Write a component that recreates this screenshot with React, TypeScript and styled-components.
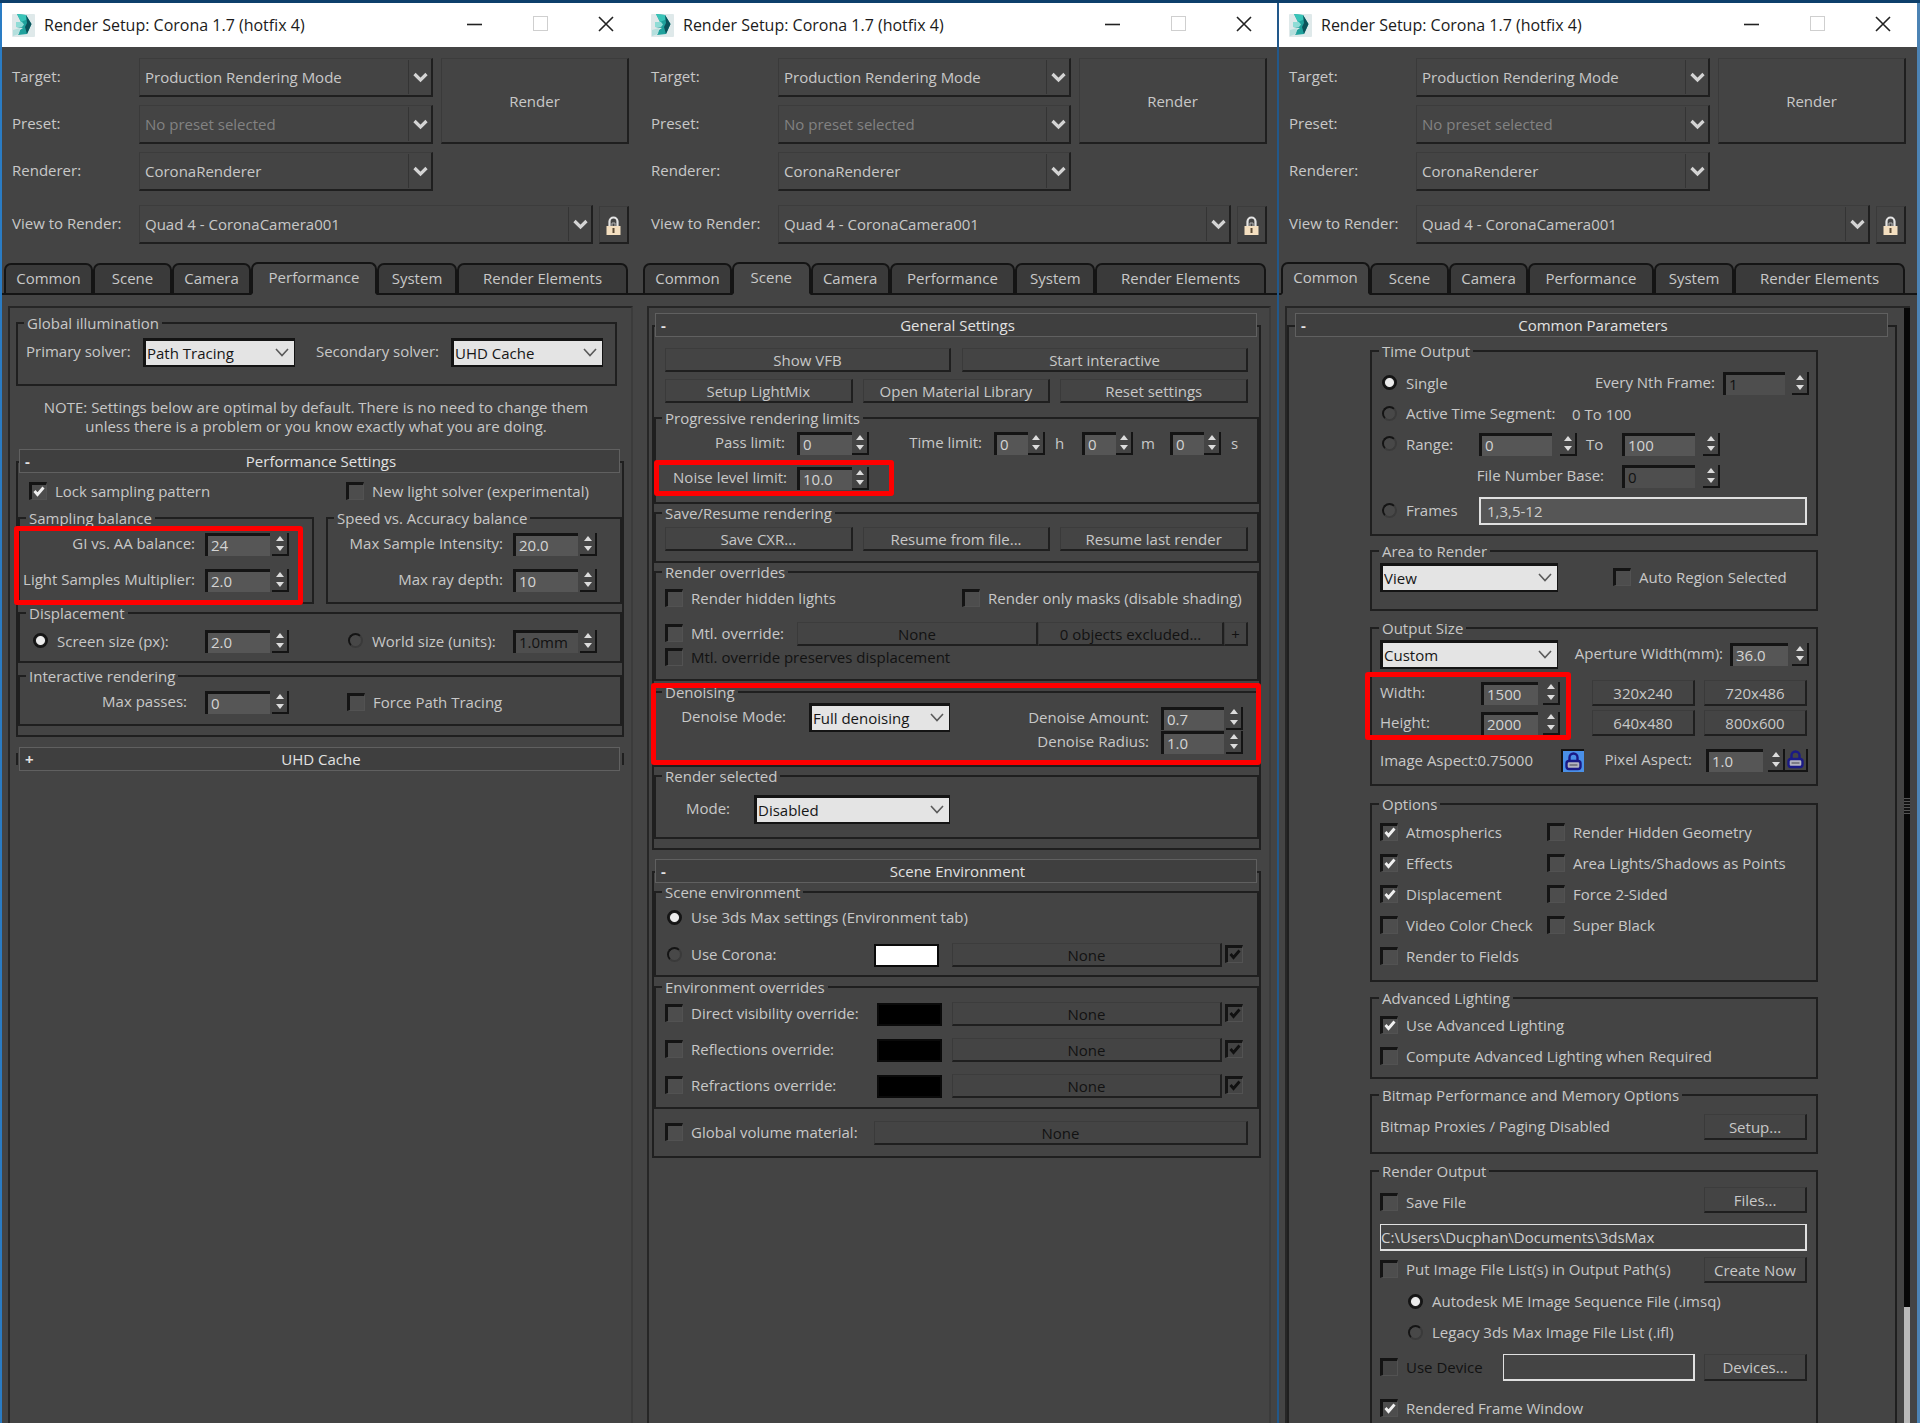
import React, { useId } from "react";
import type { ReactNode } from "react";
import styled, { createGlobalStyle, css } from "styled-components";

const c = {
  bg: "#444444",
  line: "#1f1f1f",
  deep: "#141414",
  text: "#c8c8c8",
  bright: "#e2e2e2",
  off: "#121212",
  field: "#565656",
  blue: "#2a7cc4",
  seam: "#22588a",
  red: "#ff0000",
};

const GlobalStyle = createGlobalStyle`
  *, *::before, *::after { box-sizing: border-box; }
  body {
    margin: 0;
    background: ${c.bg};
    color: ${c.text};
    font: 15px/20px "Open Sans", "Noto Sans", sans-serif;
  }
  button, input, select { font: inherit; color: inherit; margin: 0; }
  fieldset { min-width: 0; margin: 0; padding: 0; }
`;

/* ---------- window shell ---------- */

const Desktop = styled.main`
  display: grid;
  grid-template-columns: 639fr 638fr 643fr;
  min-height: 100vh;
  border-top: 3px solid #0d3f6b;
  overflow: hidden;
`;

const Win = styled.section<{ $left?: string; $tail: number }>`
  position: relative;
  display: flex;
  flex-direction: column;
  min-width: 0;
  background: ${c.bg};
  &::before {
    content: "";
    position: absolute;
    z-index: 2;
    inset: 0 auto 0 0;
    width: 2px;
    background: ${(p) => p.$left ?? "transparent"};
  }
  &::after {
    content: "";
    position: absolute;
    z-index: 2;
    inset: 0 0 0 auto;
    width: ${(p) => (p.$tail ? 3 : 0)}px;
    background: #4c83b4;
  }
`;

const TitleBar = styled.header<{ $tail: number }>`
  display: flex;
  align-items: center;
  height: 44px;
  padding: 0 ${(p) => p.$tail}px 0 12px;
  background: #fff;
  color: #1b1b1b;
`;

const Title = styled.h1`
  flex: 1;
  margin: 0 0 0 9px;
  font-size: 16px;
  font-weight: 400;
  white-space: nowrap;
`;

const Caption = styled.button`
  display: grid;
  place-items: center;
  width: 66px;
  height: 44px;
  padding: 0 0 3px;
  border: 0;
  background: none;
`;

const Form = styled.div<{ $tail: number }>`
  display: grid;
  gap: 14px;
  padding: 11px ${(p) => p.$tail + 10}px 0 12px;
`;

const FormTop = styled.div`
  display: flex;
  align-items: flex-start;
  gap: 8px;
`;

const FormGrid = styled.div`
  flex: 1;
  display: grid;
  gap: 8px;
`;

const FormRow = styled.div`
  display: grid;
  grid-template-columns: 127px 1fr auto;
  align-items: center;
`;

const Raised = css`
  border: solid ${c.line};
  border-width: 1px 2px 2px 1px;
  border-top-color: #3c3c3c;
  border-left-color: #3a3a3a;
  background: #444;
`;

const RenderButton = styled.button`
  ${Raised}
  width: 188px;
  height: 86px;
`;

const LockButton = styled.button`
  ${Raised}
  display: grid;
  place-items: center;
  width: 30px;
  height: 38px;
  margin-left: 6px;
  padding: 4px 0 0;
`;

const DarkBox = styled.div`
  position: relative;
  height: 39px;
  svg {
    position: absolute;
    right: 4px;
    top: 14px;
    pointer-events: none;
  }
  &::after {
    content: "";
    position: absolute;
    right: 24px;
    top: 2px;
    bottom: 3px;
    width: 1px;
    background: #343434;
  }
`;

const DarkSelect = styled.select<{ $dim?: boolean }>`
  ${Raised}
  appearance: none;
  width: 100%;
  height: 100%;
  padding: 0 26px 0 5px;
  border-radius: 0;
  ${(p) => p.$dim && "color: #828282;"}
`;

const LightBox = styled.div<{ $w: number }>`
  position: relative;
  width: ${(p) => p.$w}px;
  height: 29px;
  svg {
    position: absolute;
    right: 6px;
    top: 10px;
    pointer-events: none;
  }
`;

const LightSelect = styled.select`
  appearance: none;
  width: 100%;
  height: 100%;
  padding: 0 20px 0 1px;
  border: solid ${c.deep};
  border-width: 3px 1px 2px 3px;
  border-radius: 0;
  background: #e4e4e4;
  color: #161616;
`;

const Tabs = styled.div<{ $tail: number }>`
  display: grid;
  grid-template-columns: 89fr 79fr 79fr 126fr 80fr 171fr;
  align-items: end;
  margin-top: 18px;
  padding: 0 ${(p) => p.$tail + 11}px 0 4px;
  background: linear-gradient(${c.deep}, ${c.deep}) bottom / 100% 2px no-repeat;
`;

const Tab = styled.button<{ $on: boolean }>`
  height: 32px;
  padding: 0 0 3px;
  border: 2px solid ${c.deep};
  border-radius: 7px 7px 0 0;
  background: #3a3a3a;
  ${(p) =>
    p.$on &&
    css`
      height: 33px;
      border-bottom-color: ${c.bg};
      background: ${c.bg};
    `}
`;

const Panel = styled.div<{ $tail: number; $scroll?: boolean }>`
  flex: 1;
  display: flex;
  margin: 11px ${(p) => p.$tail + 6}px 0 8px;
  border: solid #262626;
  border-width: 2px ${(p) => (p.$scroll ? 0 : 2)}px 0 2px;
  border-right-color: #3b3b3b;
`;

const PanelBody = styled.div<{ $pad: string }>`
  flex: 1;
  display: flex;
  flex-direction: column;
  min-width: 0;
  padding: ${(p) => p.$pad};
`;

const ScrollRail = styled.div`
  display: flex;
  flex-direction: column;
  justify-content: space-between;
  width: 6px;
  background: #080808;
`;

const Grip = styled.span`
  height: 16px;
  margin-top: 490px;
  background: repeating-linear-gradient(#555 0 1px, #111 1px 3px);
`;

const Thumb = styled.span`
  height: 116px;
  background: #b9b9b9;
`;

/* ---------- rollouts and groups ---------- */

const RollHead = styled.button<{ $inset?: boolean }>`
  position: relative;
  z-index: 1;
  display: grid;
  grid-template-columns: 20px 1fr 20px;
  align-items: center;
  height: 24px;
  margin: ${(p) => (p.$inset ? "0 9px 0 8px" : "0 4px 0 3px")};
  padding: 0 2px 0 5px;
  border: 1px solid #606060;
  background: #3f3f3f;
  color: ${c.bright};
  text-align: center;
  line-height: 20px;
`;

const Sign = styled.span`
  text-align: left;
  font-weight: 700;
`;

const RollFrame = styled.div<{ $pb: number; $open?: boolean }>`
  display: flex;
  flex-direction: column;
  margin-top: -12px;
  padding: 10px 0 ${(p) => p.$pb}px;
  border: 2px solid ${c.line};
  ${(p) => p.$open && "flex: 1; border-bottom: 0; padding-left: 7px; padding-right: 3px;"}
`;

const Stub = styled.div`
  height: 12px;
  margin-top: -18px;
  border: solid ${c.line};
  border-width: 0 2px;
`;

const Roll = styled.section<{ $grow?: boolean; $mt?: number }>`
  display: flex;
  flex-direction: column;
  margin-top: ${(p) => p.$mt ?? 0}px;
  ${(p) => p.$grow && "flex: 1;"}
`;

const GroupBox = styled.fieldset<{ $mt: number; $narrow?: boolean; $open?: boolean }>`
  margin-top: ${(p) => p.$mt}px;
  border: 2px solid ${c.line};
  ${(p) => p.$narrow && "width: 100%; max-width: 448px; margin-left: auto; margin-right: auto;"}
  ${(p) => p.$open && "flex: 1; border-bottom: 0;"}
  > legend {
    margin-left: ${(p) => (p.$narrow ? 7 : 6)}px;
    padding: 0 3px;
    height: 18px;
    line-height: 18px;
  }
`;

const Stack = styled.div<{ $gap: number; $pad?: string }>`
  display: grid;
  gap: ${(p) => p.$gap}px;
  padding: ${(p) => p.$pad ?? "0"};
`;

const Row = styled.div<{ $h?: number; $pad?: string; $mt?: number; $low?: boolean }>`
  display: flex;
  align-items: ${(p) => (p.$low ? "flex-end" : "center")};
  height: ${(p) => p.$h ?? 20}px;
  margin-top: ${(p) => p.$mt ?? 0}px;
  padding: ${(p) => p.$pad ?? "0"};
  white-space: nowrap;
`;

const Cols = styled.div<{ $t: string; $gap?: string; $mt?: number; $pad?: string; $top?: boolean }>`
  display: grid;
  grid-template-columns: ${(p) => p.$t};
  gap: ${(p) => p.$gap ?? "0"};
  margin-top: ${(p) => p.$mt ?? 0}px;
  padding: ${(p) => p.$pad ?? "0"};
  align-items: ${(p) => (p.$top ? "start" : "center")};
  white-space: nowrap;
`;

const Push = styled.div`
  display: flex;
  align-items: center;
  margin-left: auto;
`;

const Marked = styled.div<{ $inset: string }>`
  position: relative;
  &::after {
    content: "";
    position: absolute;
    z-index: 3;
    inset: ${(p) => p.$inset};
    border: 5px solid ${c.red};
    border-radius: 3px;
    pointer-events: none;
  }
`;

const Note = styled.p`
  margin: 12px 8px 13px 0;
  line-height: 19px;
  text-align: center;
`;

/* ---------- controls ---------- */

const Push3d = styled.button<{ $h?: number; $off?: boolean }>`
  ${Raised}
  height: ${(p) => p.$h ?? 24}px;
  min-width: 0;
  padding: 0;
  line-height: 18px;
  white-space: nowrap;
  ${(p) => p.$off && `color: ${c.off};`}
`;

const WideButton = styled(Push3d)`
  flex: 1;
`;

const SizedButton = styled(Push3d)<{ $w: number }>`
  width: ${(p) => p.$w}px;
`;

const FieldLabel = styled.label<{ $w?: number; $pad?: number; $start?: boolean }>`
  ${(p) => (p.$w ? `flex: none; width: ${p.$w}px;` : "flex: 1;")}
  padding: 0 ${(p) => p.$pad ?? 10}px 3px 0;
  text-align: ${(p) => (p.$start ? "left" : "right")};
  white-space: nowrap;
`;

const Plain = styled.span<{ $w?: number; $pad?: number }>`
  width: ${(p) => (p.$w ? `${p.$w}px` : "auto")};
  padding: 0 0 2px ${(p) => p.$pad ?? 0}px;
`;

const NumInput = styled.input<{ $w: number }>`
  width: ${(p) => p.$w}px;
  height: 23px;
  padding: 0 0 2px 3px;
  border: solid ${c.deep};
  border-width: 3px 0 0 3px;
  border-radius: 0;
  background: ${c.field};
  color: #d4d4d4;
  &:disabled {
    background: #4e4e4e;
    color: ${c.off};
  }
`;

const Spin = styled.span<{ $gap: number }>`
  display: flex;
  flex-direction: column;
  width: 17px;
  height: 23px;
  margin-left: ${(p) => p.$gap}px;
  border: solid ${c.deep};
  border-width: 0 2px 2px 0;
`;

const SpinButton = styled.button`
  flex: 1;
  display: grid;
  place-items: center;
  padding: 0;
  border: 0;
  background: none;
`;

const NumWrap = styled.span`
  display: flex;
  flex: none;
  height: 23px;
`;

const TextInput = styled.input<{ $h?: number; $pad?: number; $fill?: boolean }>`
  flex: 1;
  min-width: 0;
  width: 100%;
  height: ${(p) => p.$h ?? 27}px;
  padding: 0 0 1px ${(p) => p.$pad ?? 0}px;
  border: solid #e0e0e0;
  border-width: ${(p) => (p.$fill ? "2px" : "1px 2px 2px 1px")};
  border-radius: 0;
  background: ${(p) => (p.$fill ? c.field : c.bg)};
  color: #cfcfcf;
`;

const Choice = styled.label<{ $w?: number; $ml?: number; $off?: boolean; $gap: number }>`
  display: flex;
  flex: none;
  align-items: center;
  gap: ${(p) => p.$gap}px;
  ${(p) => p.$w && `width: ${p.$w}px;`}
  height: 20px;
  margin-left: ${(p) => p.$ml ?? 0}px;
  padding-bottom: 2px;
  white-space: nowrap;
  ${(p) => p.$off && `color: ${c.off};`}
`;

const Tick = styled.span<{ $off?: boolean }>`
  position: relative;
  display: block;
  width: 18px;
  height: 18px;
  color: ${(p) => (p.$off ? "#111" : "#f0f0f0")};
  input {
    appearance: none;
    display: block;
    width: 18px;
    height: 18px;
    border: solid ${c.deep};
    border-width: 3px 1px 1px 3px;
    border-right-color: #525252;
    border-bottom-color: #525252;
    background: ${(p) => (p.$off ? c.bg : "#4d4d4d")};
  }
  svg {
    position: absolute;
    left: 4px;
    top: 4px;
    display: none;
    pointer-events: none;
  }
  input:checked + svg {
    display: block;
  }
`;

const Dot = styled.input`
  appearance: none;
  width: 15px;
  height: 15px;
  border: 2px solid ${c.deep};
  border-right-color: #3a3a3a;
  border-bottom-color: #3a3a3a;
  border-radius: 50%;
  background: #484848;
  &:checked {
    border-color: ${c.deep};
    background: radial-gradient(circle, #ececec 0 4px, #222 5px);
  }
`;

const Swatch = styled.button<{ $c: string }>`
  width: 65px;
  height: 23px;
  padding: 0;
  border: 2px solid #0a0a0a;
  background: ${(p) => p.$c};
`;

const AspectLock = styled.button<{ $on?: boolean }>`
  display: grid;
  flex: none;
  place-items: center;
  width: 23px;
  height: 23px;
  padding: 0;
  border: solid ${c.deep};
  border-width: ${(p) => (p.$on ? "2px 0 0 2px" : "0 2px 2px 0")};
  background: ${(p) => (p.$on ? "#4a90e8" : c.bg)};
`;

const DarkChevron = () => (
  <svg width="17" height="11" viewBox="0 0 17 11" aria-hidden="true">
    <path d="M2.5 2 L8.5 8 L14.5 2" fill="none" stroke="#d4d4d4" strokeWidth="3.2" />
  </svg>
);

const LightChevron = () => (
  <svg width="14" height="9" viewBox="0 0 14 9" aria-hidden="true">
    <path d="M1 1 L7 7.5 L13 1" fill="none" stroke="#5a5a5a" strokeWidth="1.6" />
  </svg>
);

const Logo = () => (
  <svg width="23" height="23" viewBox="0 0 23 23" aria-hidden="true">
    <rect width="23" height="23" rx="1" fill="#dfe9ea" />
    <path d="M5 0 L14 1 L19.5 10 L15 20 L6 21 L8 16 L11 14 L4 13 L4 8 L9 8 Z" fill="#1fa19c" />
    <path d="M5 0 L14 1 L16 5 L9 8 Z" fill="#38c4b8" />
    <path d="M14 1 L19.5 10 L15 20 L13 13 L15 9 Z" fill="#0b525a" />
    <path d="M4 8 L10 8 L12 10.500 L10 13 L4 13 Z" fill="#8fdcd6" />
    <path d="M1 16 L8 14 L7 20 L1 22 Z" fill="#b4dfdd" />
  </svg>
);

const Padlock = () => (
  <svg width="15" height="20" viewBox="0 0 15 20" aria-hidden="true">
    <path d="M3.5 10 V5.5 a4 4 0 0 1 8 0 V10" fill="none" stroke="#e4e4e4" strokeWidth="2.2" />
    <path d="M6 10 V7 h3 V10" fill="none" stroke="#b5b5b5" strokeWidth="1" />
    <rect x="0.500" y="10" width="14" height="9" fill="#f4dfc0" />
    <rect x="6.5" y="12" width="2" height="5" fill="#5a4a34" />
  </svg>
);

const MiniLock = () => (
  <svg width="17" height="19" viewBox="0 0 17 19" aria-hidden="true">
    <path d="M4.500 9 V5.500 a4 4 0 0 1 8 0 V9" fill="none" stroke="#1a1a86" strokeWidth="2.4" />
    <rect x="1.5" y="9" width="14" height="8" rx="2.500" fill="#b4b4c0" stroke="#1a1a86" strokeWidth="2.4" />
    <path d="M4.500 13 H12.500" stroke="#55555f" strokeWidth="1.200" />
  </svg>
);

const Arrow = ({ down }: { down?: boolean }) => (
  <svg width="8" height="5" viewBox="0 0 8 5" aria-hidden="true">
    <path d={down ? "M0 0 H8 L4 5 Z" : "M0 5 H8 L4 0 Z"} fill="#dcdcdc" />
  </svg>
);

/* ---------- composed parts ---------- */

function Num({ id, value, w, gap = 0, off, name }: { id?: string; value: string; w: number; gap?: number; off?: boolean; name?: string }) {
  return (
    <NumWrap>
      <NumInput id={id} aria-label={name} defaultValue={value} $w={w} disabled={off} />
      <Spin $gap={gap}>
        <SpinButton type="button" aria-label="Increase"><Arrow /></SpinButton>
        <SpinButton type="button" aria-label="Decrease"><Arrow down /></SpinButton>
      </Spin>
    </NumWrap>
  );
}

type NumFieldProps = { label: string; value: string; lw?: number; pad?: number; start?: boolean; w: number; gap?: number; off?: boolean };

function NumField({ label, lw, pad, start, ...num }: NumFieldProps) {
  const id = useId();
  return (
    <>
      <FieldLabel htmlFor={id} $w={lw} $pad={pad} $start={start}>{label}</FieldLabel>
      <Num id={id} {...num} />
    </>
  );
}

function Pick({ label, value, lw, pad, start, w }: { label?: string; value: string; lw?: number; pad?: number; start?: boolean; w: number }) {
  const id = useId();
  return (
    <>
      {label && <FieldLabel htmlFor={id} $w={lw} $pad={pad} $start={start}>{label}</FieldLabel>}
      <LightBox $w={w}>
        <LightSelect id={id} aria-label={label ? undefined : value}><option>{value}</option></LightSelect>
        <LightChevron />
      </LightBox>
    </>
  );
}

function Check({ label, on, off, w, ml, name }: { label?: string; on?: boolean; off?: boolean; w?: number; ml?: number; name?: string }) {
  return (
    <Choice $w={w} $ml={ml} $off={off} $gap={8}>
      <Tick $off={off}>
        <input type="checkbox" defaultChecked={on} disabled={off} aria-label={name} />
        <svg width="12" height="12" viewBox="0 0 12 12" aria-hidden="true">
          <path d="M1.5 5 L4.5 8.500 L10.5 1.500" fill="none" stroke="currentColor" strokeWidth="2.8" />
        </svg>
      </Tick>
      {label}
    </Choice>
  );
}

function Radio({ label, group, on, w, ml }: { label: string; group: string; on?: boolean; w?: number; ml?: number }) {
  return (
    <Choice $w={w} $ml={ml} $gap={9}>
      <Dot type="radio" name={group} defaultChecked={on} />
      {label}
    </Choice>
  );
}

type GroupProps = { title: string; pad: string; gap?: number; mt?: number; narrow?: boolean; open?: boolean; children: ReactNode };

function Group({ title, pad, gap = 0, mt = 0, narrow, open, children }: GroupProps) {
  return (
    <GroupBox $mt={mt} $narrow={narrow} $open={open}>
      <legend>{title}</legend>
      <Stack $gap={gap} $pad={pad}>{children}</Stack>
    </GroupBox>
  );
}

function Rollout({ title, pb = 0, mt, grow, children }: { title: string; pb?: number; mt?: number; grow?: boolean; children?: ReactNode }) {
  return (
    <Roll $grow={grow} $mt={mt}>
      <RollHead type="button" aria-expanded={!!children} $inset={grow}>
        <Sign>{children ? "-" : "+"}</Sign>
        <span>{title}</span>
      </RollHead>
      {children ? <RollFrame $pb={pb} $open={grow}>{children}</RollFrame> : <Stub />}
    </Roll>
  );
}

function HeaderSelect({ label, value, dim, after }: { label: string; value: string; dim?: boolean; after?: ReactNode }) {
  const id = useId();
  return (
    <FormRow>
      <FieldLabel htmlFor={id} $start>{label}</FieldLabel>
      <DarkBox>
        <DarkSelect id={id} $dim={dim}><option>{value}</option></DarkSelect>
        <DarkChevron />
      </DarkBox>
      {after}
    </FormRow>
  );
}

const tabNames = ["Common", "Scene", "Camera", "Performance", "System", "Render Elements"];

function RenderWindow({ active, left, tail = 0, children }: { active: string; left?: string; tail?: number; children: ReactNode }) {
  return (
    <Win $left={left} $tail={tail}>
      <TitleBar $tail={tail}>
        <Logo />
        <Title>Render Setup: Corona 1.7 (hotfix 4)</Title>
        <Caption type="button" aria-label="Minimize">
          <svg width="15" height="15" viewBox="0 0 15 15"><path d="M0 8.5 H15" stroke="#222" strokeWidth="1.6" /></svg>
        </Caption>
        <Caption type="button" aria-label="Maximize" disabled>
          <svg width="15" height="15" viewBox="0 0 15 15"><rect x="0.5" y="0.5" width="14" height="14" fill="none" stroke="#cfcfcf" /></svg>
        </Caption>
        <Caption type="button" aria-label="Close">
          <svg width="16" height="16" viewBox="0 0 16 16"><path d="M1 1 L15 15 M15 1 L1 15" stroke="#222" strokeWidth="1.6" /></svg>
        </Caption>
      </TitleBar>
      <Form $tail={tail}>
        <FormTop>
          <FormGrid>
            <HeaderSelect label="Target:" value="Production Rendering Mode" />
            <HeaderSelect label="Preset:" value="No preset selected" dim />
            <HeaderSelect label="Renderer:" value="CoronaRenderer" />
          </FormGrid>
          <RenderButton type="button">Render</RenderButton>
        </FormTop>
        <HeaderSelect
          label="View to Render:"
          value="Quad 4 - CoronaCamera001"
          after={<LockButton type="button" aria-label="Lock view"><Padlock /></LockButton>}
        />
      </Form>
      <Tabs role="tablist" $tail={tail}>
        {tabNames.map((t) => (
          <Tab key={t} type="button" role="tab" aria-selected={t === active} $on={t === active}>{t}</Tab>
        ))}
      </Tabs>
      {children}
    </Win>
  );
}

/* ---------- the three windows ---------- */

const GiArea = styled.div`
  margin-right: 7px;
`;

function PerformanceWindow() {
  return (
    <RenderWindow active="Performance" left={c.blue}>
      <Panel $tail={0}>
        <PanelBody $pad="6px 7px 0 6px">
          <GiArea>
            <Group title="Global illumination" pad="6px 0 17px 8px">
              <Row $h={29}>
                <Pick label="Primary solver:" value="Path Tracing" lw={117} start w={152} />
                <Pick label="Secondary solver:" value="UHD Cache" lw={156} pad={12} w={152} />
              </Row>
            </Group>
          </GiArea>
          <Note>
            NOTE: Settings below are optimal by default. There is no need to change them
            <br />
            unless there is a problem or you know exactly what you are doing.
          </Note>
          <Rollout title="Performance Settings" pb={9}>
            <Cols $t="317px 1fr" $mt={9} $pad="0 0 0 11px">
              <Check label="Lock sampling pattern" on />
              <Check label="New light solver (experimental)" />
            </Cols>
            <Cols $t="1fr 1fr" $gap="12px" $mt={7}>
              <Group title="Sampling balance" pad="6px 0 10px">
                <Marked $inset="-7px 9px -13px -6px">
                  <Stack $gap={13}>
                    <Row $h={23}><NumField label="GI vs. AA balance:" value="24" lw={185} w={65} gap={2} /></Row>
                    <Row $h={23}><NumField label="Light Samples Multiplier:" value="2.0" lw={185} w={65} gap={2} /></Row>
                  </Stack>
                </Marked>
              </Group>
              <Group title="Speed vs. Accuracy balance" pad="6px 0 10px" gap={13}>
                <Row $h={23}><NumField label="Max Sample Intensity:" value="20.0" lw={185} w={65} gap={2} /></Row>
                <Row $h={23}><NumField label="Max ray depth:" value="10" lw={185} w={65} gap={2} /></Row>
              </Group>
            </Cols>
            <Group title="Displacement" pad="8px 0">
              <Cols $t="308px 1fr">
                <Row $h={23}>
                  <Radio label="Screen size (px):" group="displacement" on w={172} ml={13} />
                  <Num value="2.0" w={65} gap={2} name="Screen size" />
                </Row>
                <Row $h={23}>
                  <Radio label="World size (units):" group="displacement" w={165} ml={20} />
                  <Num value="1.0mm" w={65} gap={2} off name="World size" />
                </Row>
              </Cols>
            </Group>
            <Group title="Interactive rendering" pad="6px 0 10px" mt={4}>
              <Cols $t="308px 1fr">
                <Row $h={23}><NumField label="Max passes:" value="0" lw={185} pad={18} w={65} gap={2} /></Row>
                <Check label="Force Path Tracing" ml={19} />
              </Cols>
            </Group>
          </Rollout>
          <Rollout title="UHD Cache" mt={10} />
        </PanelBody>
      </Panel>
    </RenderWindow>
  );
}

const EnvRow = styled.div<{ $w: number }>`
  display: grid;
  grid-template-columns: ${(p) => p.$w}px ${(p) => 287 - p.$w}px 1fr 21px;
  align-items: center;
  height: 24px;
`;

const EnvCheck = styled.div`
  display: flex;
  justify-content: flex-end;
`;

function EnvSlot({ w, color, name, children }: { w: number; color: string; name: string; children: ReactNode }) {
  return (
    <EnvRow $w={w}>
      {children}
      <Swatch type="button" $c={color} aria-label={`${name} color`} />
      <Push3d type="button" $off>None</Push3d>
      <EnvCheck><Check on off name={`${name} map enabled`} /></EnvCheck>
    </EnvRow>
  );
}

function SceneWindow() {
  return (
    <RenderWindow active="Scene">
      <Panel $tail={0}>
        <PanelBody $pad="5px 8px 0 3px">
          <Rollout title="General Settings" pb={9}>
            <Cols $t="1fr 1fr" $gap="11px" $mt={11} $pad="0 11px">
              <Push3d type="button">Show VFB</Push3d>
              <Push3d type="button">Start interactive</Push3d>
            </Cols>
            <Cols $t="1fr 1fr 1fr" $gap="10px" $mt={7} $pad="0 11px">
              <Push3d type="button">Setup LightMix</Push3d>
              <Push3d type="button">Open Material Library</Push3d>
              <Push3d type="button">Reset settings</Push3d>
            </Cols>
            <Group title="Progressive rendering limits" pad="5px 0 12px" gap={12} mt={6}>
              <Row $h={23}>
                <NumField label="Pass limit:" value="0" lw={141} pad={12} w={55} />
                <NumField label="Time limit:" value="0" lw={125} pad={12} w={34} />
                <Plain $w={37} $pad={10}>h</Plain>
                <Num value="0" w={34} name="Minutes" />
                <Plain $w={37} $pad={8}>m</Plain>
                <Num value="0" w={34} name="Seconds" />
                <Plain $pad={10}>s</Plain>
              </Row>
              <Cols $t="240px">
                <Marked $inset="-7px 2px -6px -2px">
                  <Row $h={23}><NumField label="Noise level limit:" value="10.0" lw={141} w={55} /></Row>
                </Marked>
              </Cols>
            </Group>
            <Group title="Save/Resume rendering" pad="5px 9px 10px">
              <Cols $t="1fr 1fr 1fr" $gap="10px">
                <Push3d type="button">Save CXR...</Push3d>
                <Push3d type="button">Resume from file...</Push3d>
                <Push3d type="button">Resume last render</Push3d>
              </Cols>
            </Group>
            <Group title="Render overrides" pad="8px 9px 11px">
              <Cols $t="297px 1fr">
                <Check label="Render hidden lights" />
                <Check label="Render only masks (disable shading)" />
              </Cols>
              <Row $h={24} $mt={13}>
                <Check label="Mtl. override:" w={132} />
                <WideButton type="button" $off>None</WideButton>
                <SizedButton type="button" $w={186} $off>0 objects excluded...</SizedButton>
                <SizedButton type="button" $w={24} $off>+</SizedButton>
              </Row>
              <Row $mt={2}><Check label="Mtl. override preserves displacement" off /></Row>
            </Group>
            <Marked $inset="2px -2px 2px -3px">
              <Group title="Denoising" pad="2px 14px 11px 0" mt={2}>
                <Cols $t="294px 1fr" $top>
                  <Row $h={29}><Pick label="Denoise Mode:" value="Full denoising" lw={153} pad={23} w={141} /></Row>
                  <Push>
                    <Stack $gap={1}>
                      <Row $h={24} $mt={3}><NumField label="Denoise Amount:" value="0.7" lw={140} pad={12} w={63} gap={2} /></Row>
                      <Row $h={23}><NumField label="Denoise Radius:" value="1.0" lw={140} pad={12} w={63} gap={2} /></Row>
                    </Stack>
                  </Push>
                </Cols>
              </Group>
            </Marked>
            <Group title="Render selected" pad="10px 0 13px">
              <Row $h={29}><Pick label="Mode:" value="Disabled" lw={98} pad={24} w={196} /></Row>
            </Group>
          </Rollout>
          <Rollout title="Scene Environment" pb={11} mt={9}>
            <Group title="Scene environment" pad="7px 14px 8px 9px" gap={15}>
              <Row><Radio label="Use 3ds Max settings (Environment tab)" group="environment" on ml={2} /></Row>
              <EnvSlot w={209} color="#fff" name="Corona environment"><Radio label="Use Corona:" group="environment" ml={2} /></EnvSlot>
            </Group>
            <Group title="Environment overrides" pad="6px 14px 9px 9px" gap={12} mt={1}>
              <EnvSlot w={212} color="#000" name="Direct visibility"><Check label="Direct visibility override:" /></EnvSlot>
              <EnvSlot w={212} color="#000" name="Reflections"><Check label="Reflections override:" /></EnvSlot>
              <EnvSlot w={212} color="#000" name="Refractions"><Check label="Refractions override:" /></EnvSlot>
            </Group>
            <Row $h={24} $mt={12} $pad="0 11px">
              <Check label="Global volume material:" w={209} />
              <WideButton type="button" $off>None</WideButton>
            </Row>
          </Rollout>
        </PanelBody>
      </Panel>
    </RenderWindow>
  );
}

function CommonWindow() {
  return (
    <RenderWindow active="Common" left={c.seam} tail={4}>
      <Panel $tail={4} $scroll>
        <PanelBody $pad="5px 7px 0 0">
          <Rollout title="Common Parameters" grow>
            <Group narrow title="Time Output" pad="12px 0 9px 10px" gap={9} mt={5}>
              <Row $h={23} $pad="0 7px 0 0">
                <Radio label="Single" group="time" on />
                <NumField label="Every Nth Frame:" value="1" pad={8} w={62} gap={7} off />
              </Row>
              <Row>
                <Radio label="Active Time Segment:" group="time" w={190} />
                <span>0 To 100</span>
              </Row>
              <Row $h={23}>
                <Radio label="Range:" group="time" w={97} />
                <Num value="0" w={73} gap={8} name="Range start" />
                <Plain $w={45} $pad={9}>To</Plain>
                <Num value="100" w={73} gap={8} name="Range end" />
              </Row>
              <Row $h={23}><NumField label="File Number Base:" value="0" lw={240} pad={18} w={73} gap={8} off /></Row>
              <Row $h={28} $pad="0 9px 0 0">
                <Radio label="Frames" group="time" w={97} />
                <TextInput aria-label="Frame list" defaultValue="1,3,5-12" $h={28} $pad={6} $fill />
              </Row>
            </Group>
            <Group narrow title="Area to Render" pad="3px 0 17px 8px" mt={6}>
              <Row $h={29}>
                <Pick value="View" w={178} />
                <Check label="Auto Region Selected" ml={55} />
              </Row>
            </Group>
            <Group narrow title="Output Size" pad="3px 7px 12px 8px" mt={8}>
              <Row $h={29}>
                <Pick value="Custom" w={178} />
                <NumField label="Aperture Width(mm):" value="36.0" pad={7} w={58} gap={4} />
              </Row>
              <Cols $t="180px 215px" $gap="32px" $mt={11}>
                <Marked $inset="-8px -11px -4px -15px">
                  <Stack $gap={4}>
                    <Row $h={26}><NumField label="Width:" value="1500" lw={101} start w={57} gap={5} /></Row>
                    <Row $h={26}><NumField label="Height:" value="2000" lw={101} start w={57} gap={5} /></Row>
                  </Stack>
                </Marked>
                <Cols $t="1fr 1fr" $gap="4px 9px">
                  <Push3d type="button" $h={26}>320x240</Push3d>
                  <Push3d type="button" $h={26}>720x486</Push3d>
                  <Push3d type="button" $h={26}>640x480</Push3d>
                  <Push3d type="button" $h={26}>800x600</Push3d>
                </Cols>
              </Cols>
              <Row $h={23} $mt={13}>
                <Plain $w={181}>Image Aspect:0.75000</Plain>
                <AspectLock type="button" $on aria-label="Lock image aspect"><MiniLock /></AspectLock>
                <NumField label="Pixel Aspect:" value="1.0" lw={122} pad={14} w={57} gap={5} />
                <AspectLock type="button" aria-label="Lock pixel aspect"><MiniLock /></AspectLock>
              </Row>
            </Group>
            <Group narrow title="Options" pad="10px 0 13px 8px" mt={9}>
              <Cols $t="167px 1fr" $gap="11px 0">
                <Check label="Atmospherics" on />
                <Check label="Render Hidden Geometry" />
                <Check label="Effects" on />
                <Check label="Area Lights/Shadows as Points" />
                <Check label="Displacement" on />
                <Check label="Force 2-Sided" />
                <Check label="Video Color Check" />
                <Check label="Super Black" />
                <Check label="Render to Fields" />
              </Cols>
            </Group>
            <Group narrow title="Advanced Lighting" pad="9px 0 10px 8px" gap={11} mt={7}>
              <Check label="Use Advanced Lighting" on />
              <Check label="Compute Advanced Lighting when Required" />
            </Group>
            <Group narrow title="Bitmap Performance and Memory Options" pad="10px 9px 12px 8px" mt={7}>
              <Row $h={26}>
                <Plain>Bitmap Proxies / Paging Disabled</Plain>
                <Push><SizedButton type="button" $w={103} $h={26}>Setup...</SizedButton></Push>
              </Row>
            </Group>
            <Group narrow open title="Render Output" pad="7px 9px 0 8px" mt={8}>
              <Row $h={26} $low>
                <Check label="Save File" />
                <Push><SizedButton type="button" $w={103} $h={26}>Files...</SizedButton></Push>
              </Row>
              <Row $h={27} $mt={11}><TextInput aria-label="Output path" defaultValue="C:\Users\Ducphan\Documents\3dsMax" /></Row>
              <Row $h={26} $mt={6}>
                <Check label="Put Image File List(s) in Output Path(s)" />
                <Push><SizedButton type="button" $w={103} $h={26}>Create Now</SizedButton></Push>
              </Row>
              <Row $mt={9}><Radio label="Autodesk ME Image Sequence File (.imsq)" group="list" on ml={28} /></Row>
              <Row $mt={11}><Radio label="Legacy 3ds Max Image File List (.ifl)" group="list" ml={28} /></Row>
              <Cols $t="114px 1fr 103px" $gap="9px" $mt={11}>
                <Check label="Use Device" off />
                <TextInput aria-label="Device" />
                <Push3d type="button" $h={27}>Devices...</Push3d>
              </Cols>
              <Row $mt={18}><Check label="Rendered Frame Window" on /></Row>
            </Group>
          </Rollout>
        </PanelBody>
        <ScrollRail>
          <Grip />
          <Thumb />
        </ScrollRail>
      </Panel>
    </RenderWindow>
  );
}

export default function App() {
  return (
    <>
      <GlobalStyle />
      <Desktop>
        <PerformanceWindow />
        <SceneWindow />
        <CommonWindow />
      </Desktop>
    </>
  );
}
